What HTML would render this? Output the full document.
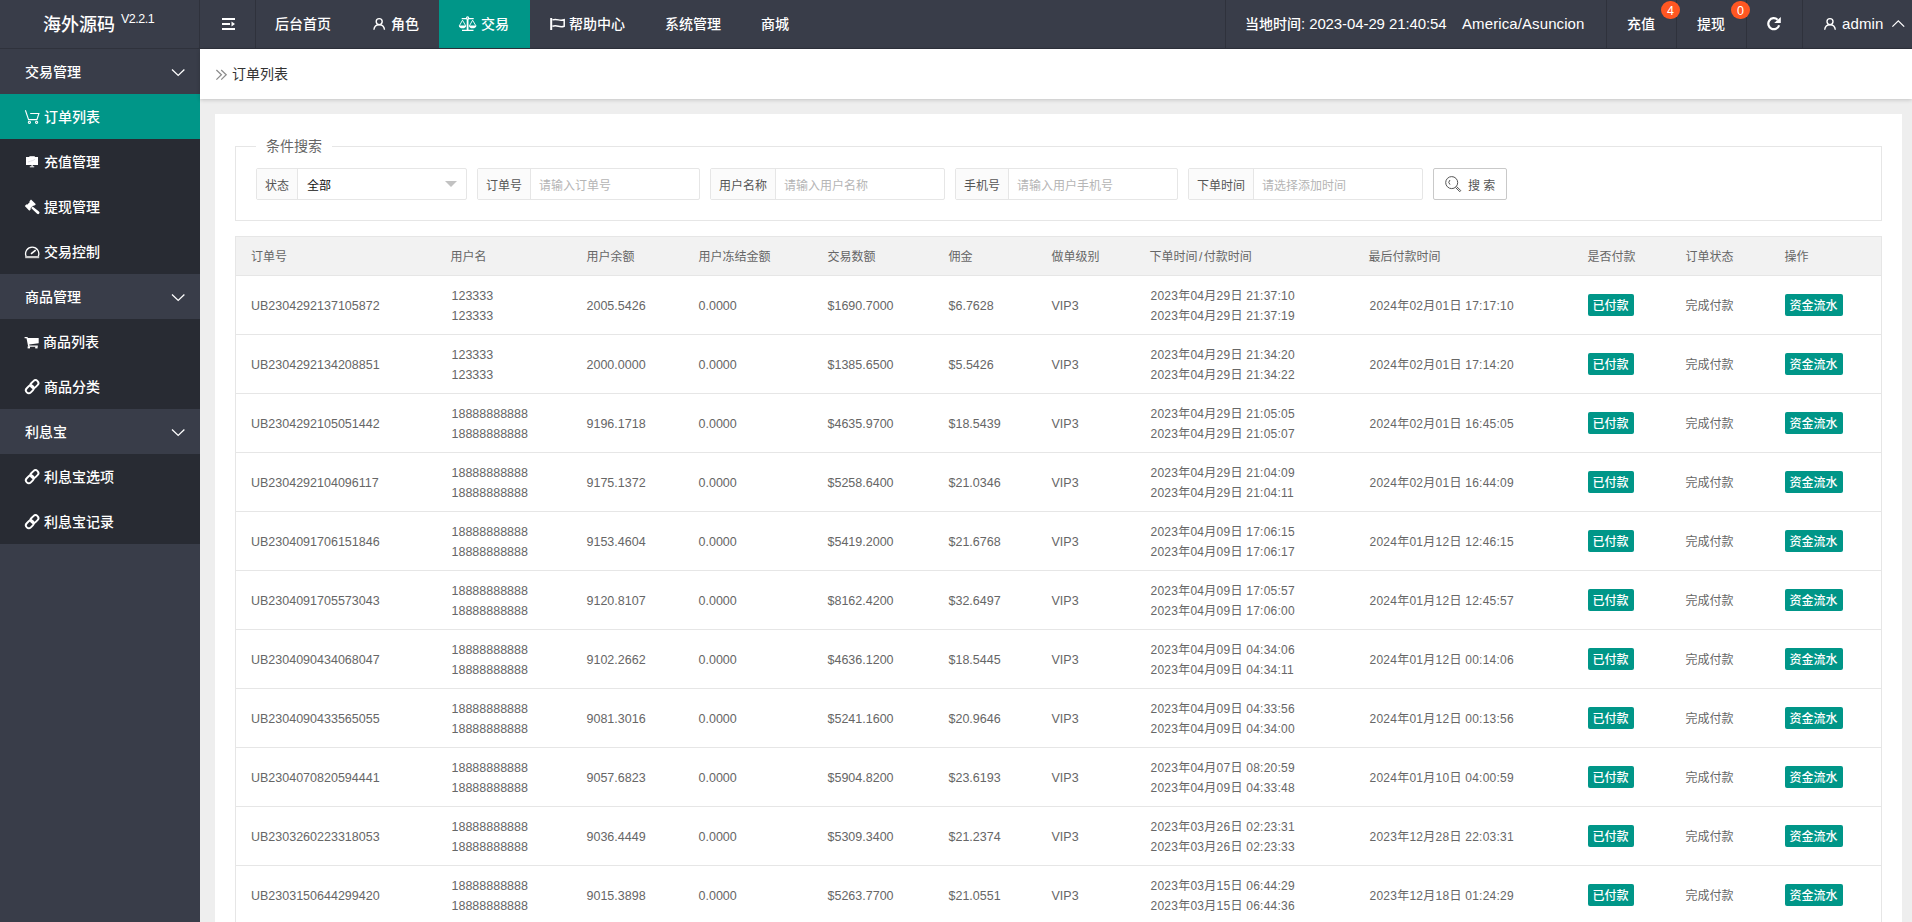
<!DOCTYPE html>
<html lang="zh-CN">
<head>
<meta charset="utf-8">
<title>订单列表</title>
<style>
*{box-sizing:border-box;margin:0;padding:0}
html,body{width:1912px;height:922px;overflow:hidden}
body{font-family:"Liberation Sans","Noto Sans CJK SC",sans-serif;font-size:14px;color:#333;background:#eee;position:relative}
svg{display:block}
/* header */
#hd,#sd{font-weight:500}
#hd{position:absolute;left:0;top:0;width:1912px;height:49px;background:#393d49;border-bottom:1px solid #2f323c;color:#fff}
#logo{position:absolute;left:0;top:0;width:200px;height:48px;border-right:1px solid #2f323c}
#logo .t{position:absolute;left:43px;top:10.5px;font-size:18px;line-height:28px;white-space:nowrap}
#logo .v{position:absolute;left:121px;top:11px;font-size:12.5px;letter-spacing:-.5px;line-height:16px;white-space:nowrap}
.nv{position:absolute;top:0;height:48px;line-height:48px;font-size:14px;white-space:nowrap;color:#fff}
.nv.on{background:#009688}
.la{font-size:15px;letter-spacing:.1px}
span.la{letter-spacing:-.1px}
.sep{position:absolute;top:0;width:1px;height:48px;background:#2f323c}
.ic{position:absolute}
.bdg{position:absolute;z-index:3;top:1px;width:19px;height:18px;border-radius:9px;background:#ff5722;color:#fff;font-size:12.5px;line-height:20.5px;text-align:center}
/* side */
#sd{position:absolute;left:0;top:49px;width:200px;height:873px;background:#393d49;color:#fff}
.g{position:absolute;left:0;width:200px;height:45px;line-height:47px;font-size:14px;padding-left:25px;white-space:nowrap}
.g svg{position:absolute;left:171px;top:18px}
.sub{position:absolute;left:0;width:200px;background:#282b33}
.it{position:absolute;left:0;width:200px;height:45px;line-height:47px;font-size:14px;white-space:nowrap}
.it.on{background:#009688}
.it span{position:absolute;left:44px;top:0}
.it svg{position:absolute}
/* crumb */
#bc{position:absolute;left:200px;top:49px;width:1712px;height:50px;background:#fff;box-shadow:0 1px 4px rgba(0,0,0,.18);font-size:14px;line-height:50px;color:#333}
#bc span{position:absolute;left:32px;top:0;white-space:nowrap}
/* card */
#cd{position:absolute;left:215px;top:114px;width:1687px;height:820px;background:#fff}
#fs{position:absolute;left:20px;top:32px;width:1647px;height:75px;border:1px solid #e6e6e6}
#lg{position:absolute;left:41px;top:21px;width:76px;height:22px;background:#fff;font-size:14px;line-height:22px;color:#666;padding-left:10px;white-space:nowrap}
.f{position:absolute;top:54px;height:32px;border:1px solid #e6e6e6;border-radius:2px;background:#fff;font-size:12px;line-height:34px;white-space:nowrap}
.f .l{position:absolute;left:0;top:0;height:30px;background:#fbfbfb;border-right:1px solid #e6e6e6;color:#555;text-align:center}
.f .p{position:absolute;top:0;color:#b5b5b5}
.f .s{position:absolute;top:0;color:#111}
#sb{position:absolute;left:1218px;top:54px;width:74px;height:32px;border:1px solid #c9c9c9;border-radius:2px;background:#fff;font-size:12px;line-height:34px;color:#555;white-space:nowrap}
/* table */
#tb{position:absolute;left:20px;top:122px;width:1647px;border-collapse:collapse;table-layout:fixed;font-size:12px;color:#666;border:1px solid #e6e6e6}
#tb th{height:39px;background:#f2f2f2;font-weight:400;text-align:left;padding:0 15px 1px;border-bottom:1px solid #e6e6e6;white-space:nowrap}
#tb td{height:59px;padding:2px 15px 0;border-bottom:1px solid #e6e6e6;line-height:20px;white-space:nowrap;vertical-align:middle}
#tb td:nth-child(-n+7){font-size:12.5px}
#tb td:nth-child(8),#tb td:nth-child(9){letter-spacing:.25px;padding-left:16px}
#tb td:nth-child(2){padding-left:16px}
.b{position:relative;top:-1px;display:inline-block;height:22px;line-height:24px;padding:0 5px;background:#009688;color:#fff;border-radius:2px;font-size:12px;font-weight:500;vertical-align:middle}
</style>
</head>
<body>
<div id="hd">
  <div id="logo"><span class="t">海外源码</span><span class="v">V2.2.1</span></div>
  <div class="sep" style="left:255px"></div>
  <div class="nv" style="left:275px">后台首页</div>
  <div class="nv" style="left:391px">角色</div>
  <div class="nv on" style="left:439px;width:91px"><span style="position:absolute;left:42px">交易</span></div>
  <div class="nv" style="left:569px">帮助中心</div>
  <div class="nv" style="left:665px">系统管理</div>
  <div class="nv" style="left:761px">商城</div>
  <div class="sep" style="left:1225px"></div>
  <div class="nv" style="left:1245px">当地时间<span class="la">: 2023-04-29 21:40:54</span></div>
  <div class="nv la" style="left:1462px">America/Asuncion</div>
  <div class="sep" style="left:1606px"></div>
  <div class="nv" style="left:1627px">充值</div>
  <div class="bdg" style="left:1661px">4</div>
  <div class="sep" style="left:1676px"></div>
  <div class="nv" style="left:1697px">提现</div>
  <div class="bdg" style="left:1731px">0</div>
  <div class="sep" style="left:1746px"></div>
  <div class="sep" style="left:1802px"></div>
  <div class="nv la" style="left:1842px">admin</div>
</div>
<div id="sd">
  <div class="g" style="top:0">交易管理</div>
  <div class="sub" style="top:45px;height:180px">
    <div class="it on" style="top:0"><span>订单列表</span></div>
    <div class="it" style="top:45px"><span>充值管理</span></div>
    <div class="it" style="top:90px"><span>提现管理</span></div>
    <div class="it" style="top:135px"><span>交易控制</span></div>
  </div>
  <div class="g" style="top:225px">商品管理</div>
  <div class="sub" style="top:270px;height:90px">
    <div class="it" style="top:0"><span style="left:43px">商品列表</span></div>
    <div class="it" style="top:45px"><span>商品分类</span></div>
  </div>
  <div class="g" style="top:360px">利息宝</div>
  <div class="sub" style="top:405px;height:90px">
    <div class="it" style="top:0"><span>利息宝选项</span></div>
    <div class="it" style="top:45px"><span>利息宝记录</span></div>
  </div>
</div>
<div id="bc"><span>订单列表</span></div>
<div id="cd">
  <div id="fs"></div>
  <div id="lg">条件搜索</div>
  <div class="f" style="left:41px;width:211px"><div class="l" style="width:41px">状态</div><div class="s" style="left:50px">全部</div></div>
  <div class="f" style="left:262px;width:223px"><div class="l" style="width:53px">订单号</div><div class="p" style="left:61px">请输入订单号</div></div>
  <div class="f" style="left:495px;width:235px"><div class="l" style="width:65px">用户名称</div><div class="p" style="left:73px">请输入用户名称</div></div>
  <div class="f" style="left:740px;width:223px"><div class="l" style="width:53px">手机号</div><div class="p" style="left:61px">请输入用户手机号</div></div>
  <div class="f" style="left:973px;width:235px"><div class="l" style="width:65px">下单时间</div><div class="p" style="left:73px">请选择添加时间</div></div>
  <div id="sb"><span style="position:absolute;left:34px">搜 索</span></div>
  <table id="tb">
    <colgroup><col style="width:200px"><col style="width:136px"><col style="width:112px"><col style="width:129px"><col style="width:121px"><col style="width:103px"><col style="width:98px"><col style="width:219px"><col style="width:219px"><col style="width:98px"><col style="width:99px"><col></colgroup>
    <thead><tr><th>订单号</th><th>用户名</th><th>用户余额</th><th>用户冻结金额</th><th>交易数额</th><th>佣金</th><th>做单级别</th><th>下单时间<span style="padding:0 1.5px">/</span>付款时间</th><th>最后付款时间</th><th>是否付款</th><th>订单状态</th><th>操作</th></tr></thead>
    <tbody>
<tr><td>UB2304292137105872</td><td>123333<br>123333</td><td>2005.5426</td><td>0.0000</td><td>$1690.7000</td><td>$6.7628</td><td>VIP3</td><td>2023年04月29日 21:37:10<br>2023年04月29日 21:37:19</td><td>2024年02月01日 17:17:10</td><td><span class="b">已付款</span></td><td>完成付款</td><td><span class="b">资金流水</span></td></tr>
<tr><td>UB2304292134208851</td><td>123333<br>123333</td><td>2000.0000</td><td>0.0000</td><td>$1385.6500</td><td>$5.5426</td><td>VIP3</td><td>2023年04月29日 21:34:20<br>2023年04月29日 21:34:22</td><td>2024年02月01日 17:14:20</td><td><span class="b">已付款</span></td><td>完成付款</td><td><span class="b">资金流水</span></td></tr>
<tr><td>UB2304292105051442</td><td>18888888888<br>18888888888</td><td>9196.1718</td><td>0.0000</td><td>$4635.9700</td><td>$18.5439</td><td>VIP3</td><td>2023年04月29日 21:05:05<br>2023年04月29日 21:05:07</td><td>2024年02月01日 16:45:05</td><td><span class="b">已付款</span></td><td>完成付款</td><td><span class="b">资金流水</span></td></tr>
<tr><td>UB2304292104096117</td><td>18888888888<br>18888888888</td><td>9175.1372</td><td>0.0000</td><td>$5258.6400</td><td>$21.0346</td><td>VIP3</td><td>2023年04月29日 21:04:09<br>2023年04月29日 21:04:11</td><td>2024年02月01日 16:44:09</td><td><span class="b">已付款</span></td><td>完成付款</td><td><span class="b">资金流水</span></td></tr>
<tr><td>UB2304091706151846</td><td>18888888888<br>18888888888</td><td>9153.4604</td><td>0.0000</td><td>$5419.2000</td><td>$21.6768</td><td>VIP3</td><td>2023年04月09日 17:06:15<br>2023年04月09日 17:06:17</td><td>2024年01月12日 12:46:15</td><td><span class="b">已付款</span></td><td>完成付款</td><td><span class="b">资金流水</span></td></tr>
<tr><td>UB2304091705573043</td><td>18888888888<br>18888888888</td><td>9120.8107</td><td>0.0000</td><td>$8162.4200</td><td>$32.6497</td><td>VIP3</td><td>2023年04月09日 17:05:57<br>2023年04月09日 17:06:00</td><td>2024年01月12日 12:45:57</td><td><span class="b">已付款</span></td><td>完成付款</td><td><span class="b">资金流水</span></td></tr>
<tr><td>UB2304090434068047</td><td>18888888888<br>18888888888</td><td>9102.2662</td><td>0.0000</td><td>$4636.1200</td><td>$18.5445</td><td>VIP3</td><td>2023年04月09日 04:34:06<br>2023年04月09日 04:34:11</td><td>2024年01月12日 00:14:06</td><td><span class="b">已付款</span></td><td>完成付款</td><td><span class="b">资金流水</span></td></tr>
<tr><td>UB2304090433565055</td><td>18888888888<br>18888888888</td><td>9081.3016</td><td>0.0000</td><td>$5241.1600</td><td>$20.9646</td><td>VIP3</td><td>2023年04月09日 04:33:56<br>2023年04月09日 04:34:00</td><td>2024年01月12日 00:13:56</td><td><span class="b">已付款</span></td><td>完成付款</td><td><span class="b">资金流水</span></td></tr>
<tr><td>UB2304070820594441</td><td>18888888888<br>18888888888</td><td>9057.6823</td><td>0.0000</td><td>$5904.8200</td><td>$23.6193</td><td>VIP3</td><td>2023年04月07日 08:20:59<br>2023年04月09日 04:33:48</td><td>2024年01月10日 04:00:59</td><td><span class="b">已付款</span></td><td>完成付款</td><td><span class="b">资金流水</span></td></tr>
<tr><td>UB2303260223318053</td><td>18888888888<br>18888888888</td><td>9036.4449</td><td>0.0000</td><td>$5309.3400</td><td>$21.2374</td><td>VIP3</td><td>2023年03月26日 02:23:31<br>2023年03月26日 02:23:33</td><td>2023年12月28日 22:03:31</td><td><span class="b">已付款</span></td><td>完成付款</td><td><span class="b">资金流水</span></td></tr>
<tr><td>UB2303150644299420</td><td>18888888888<br>18888888888</td><td>9015.3898</td><td>0.0000</td><td>$5263.7700</td><td>$21.0551</td><td>VIP3</td><td>2023年03月15日 06:44:29<br>2023年03月15日 06:44:36</td><td>2023年12月18日 01:24:29</td><td><span class="b">已付款</span></td><td>完成付款</td><td><span class="b">资金流水</span></td></tr>
    </tbody>
  </table>
</div>
<svg id="ov" width="1912" height="922" viewBox="0 0 1912 922" style="position:absolute;left:0;top:0;pointer-events:none" fill="none" stroke="none">
<!-- fold -->
<g fill="#fff"><rect x="222" y="18" width="13" height="2"/><rect x="222" y="23" width="8" height="2"/><rect x="222" y="28" width="13" height="2"/><path d="M231.5 21.5L235 24L231.5 26.5Z"/></g>
<!-- user (role) -->
<g stroke="#fff" stroke-width="1.4"><circle cx="379.2" cy="21.6" r="3"/><path d="M373.9 29.8C374.2 26.6 376.3 24.8 379.2 24.8S384.2 26.6 384.5 29.8"/></g>
<!-- scale -->
<g stroke="#fff" stroke-width="1.1"><path d="M461.7 18.6H473.7M462 30.4H473.5"/><path d="M467.6 18.6V30.4" stroke-width="1.8"/><circle cx="467.6" cy="18" r="1.1" fill="#009688"/><path d="M459.3 25.8L462.5 20.2L465.7 25.8M469.4 25.8L472.6 20.2L475.9 25.8" stroke-width=".9"/></g>
<g fill="#fff"><path d="M458.8 25.4H466.2C466.2 27.2 464.6 28.3 462.5 28.3S458.8 27.2 458.8 25.4Z"/><path d="M468.9 25.4H476.4C476.4 27.2 474.8 28.3 472.6 28.3S468.9 27.2 468.9 25.4Z"/></g>
<!-- flag -->
<g stroke="#fff"><path d="M551.2 18V30" stroke-width="2"/><path d="M552.4 19.9C554.6 19.2 556.6 19.4 558.4 19.9S562 20.6 564.2 19.8V26.2C562 27 560.2 26.8 558.4 26.3S554.6 25.6 552.4 26.3" stroke-width="1.5"/></g>
<!-- refresh -->
<path d="M1779.1 25.2A5.5 5.5 0 1 1 1777.6 19.7" stroke="#fff" stroke-width="2.2"/>
<path d="M1780.8 17V22.9H1774.2Z" fill="#fff"/>
<!-- user (admin) -->
<g stroke="#fff" stroke-width="1.4"><circle cx="1830" cy="21.6" r="3"/><path d="M1824.7 29.8C1825 26.6 1827.1 24.8 1830 24.8S1835 26.6 1835.3 29.8"/></g>
<!-- chevron up -->
<path d="M1892.4 26.6L1898.3 20.8L1904.2 26.6" stroke="#fff" stroke-width="1.3"/>
<!-- side chevrons -->
<g stroke="#fff" stroke-width="1.3"><path d="M172 69.5L178.2 75.4L184.4 69.5"/><path d="M172 294.5L178.2 300.4L184.4 294.5"/><path d="M172 429.5L178.2 435.4L184.4 429.5"/></g>
<!-- cart outline -->
<g stroke="#fff" stroke-width="1.1"><path d="M25.4 110.2L28.6 119.6H36.9L38.9 113.5H30.2"/><circle cx="29.4" cy="122.3" r="1.1"/><circle cx="36.6" cy="122.3" r="1.1"/></g>
<!-- board -->
<g fill="#fff"><rect x="26" y="157" width="12" height="8"/><rect x="29.4" y="156" width="5.4" height="1.2" opacity=".8"/><rect x="31.5" y="165" width="1.2" height="1.6"/><rect x="29.8" y="166.3" width="4.4" height="1"/></g>
<path d="M28 162L30.5 161.2L32.5 160.6L35 159.3" stroke="#d8d8e0" stroke-width=".8"/>
<!-- gavel -->
<g fill="#fff"><path d="M31 199.6L35.9 204.3L33.8 206L33.2 205.45L30.4 208.35L31 208.9L29.3 210.7L24.8 206.1L26.5 204.3L27.1 204.85L29.9 201.95L29.3 201.4Z"/><path d="M32.6 206.4L38.9 211.4A1.5 1.5 0 0 1 37.1 213.8L31.1 208.1Z"/></g>
<!-- gauge -->
<g stroke="#fff"><path d="M26.2 256.5A6.6 6.6 0 1 1 38.2 256.5" stroke-width="1.3"/><path d="M31 253.8L35.7 250.2" stroke-width="1.6"/></g>
<rect x="25.2" y="256" width="14" height="2.2" fill="#ccc"/>
<!-- cart solid -->
<g fill="#fff"><path d="M24.6 337H27.4L28 338H38.7V343.2L29.2 344.6L29.5 345.6H37.8V346.8H28.2L26.5 338.2H24.6Z"/><rect x="27.6" y="346.4" width="2.4" height="2"/><rect x="35.2" y="346.4" width="2.4" height="2"/></g>
<!-- links -->
<g stroke="#fff" stroke-width="1.9"><rect x="-4.3" y="-2.9" width="8.6" height="5.8" rx="2.9" transform="translate(34.5 384.1) rotate(-45)"/><rect x="-4.3" y="-2.9" width="8.6" height="5.8" rx="2.9" transform="translate(29.8 389.3) rotate(-45)"/></g>
<g stroke="#fff" stroke-width="1.9" transform="translate(0 90)"><rect x="-4.3" y="-2.9" width="8.6" height="5.8" rx="2.9" transform="translate(34.5 384.1) rotate(-45)"/><rect x="-4.3" y="-2.9" width="8.6" height="5.8" rx="2.9" transform="translate(29.8 389.3) rotate(-45)"/></g>
<g stroke="#fff" stroke-width="1.9" transform="translate(0 135)"><rect x="-4.3" y="-2.9" width="8.6" height="5.8" rx="2.9" transform="translate(34.5 384.1) rotate(-45)"/><rect x="-4.3" y="-2.9" width="8.6" height="5.8" rx="2.9" transform="translate(29.8 389.3) rotate(-45)"/></g>
<!-- crumb » -->
<path d="M216.4 70L221.4 74.8L216.4 79.6M221.2 70L226.2 74.8L221.2 79.6" stroke="#8c8c8c" stroke-width="1.25"/>
<!-- select tri -->
<path d="M445 181H457L451 187Z" fill="#c2c2c2"/>
<!-- search -->
<g stroke="#555" stroke-width="1"><circle cx="1451.7" cy="182.6" r="6"/><path d="M1450 180Q1447.4 182.3 1450 184.6"/><path d="M1456.6 186.6L1460.8 190.6L1459.8 191.7L1455.6 187.6"/></g>
</svg>
</body>
</html>
